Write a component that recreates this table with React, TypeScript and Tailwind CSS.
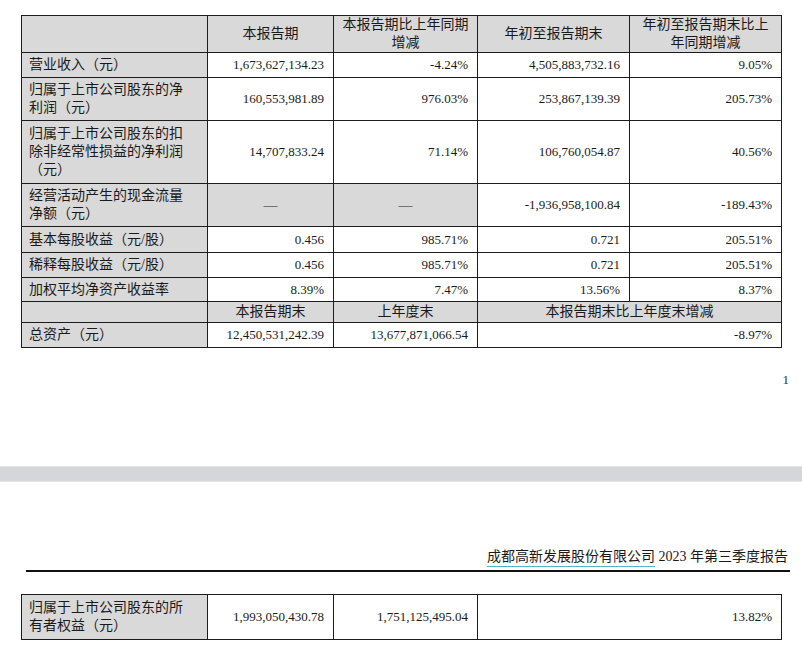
import React from 'react'

type Row = {
  label: React.ReactNode
  h: number
  cells: string[]
  dash?: boolean
}

const ROWS: Row[] = [
  { label: '营业收入（元）', h: 25, cells: ['1,673,627,134.23', '-4.24%', '4,505,883,732.16', '9.05%'] },
  { label: <>归属于上市公司股东的净<br />利润（元）</>, h: 43, cells: ['160,553,981.89', '976.03%', '253,867,139.39', '205.73%'] },
  { label: <>归属于上市公司股东的扣<br />除非经常性损益的净利润<br />（元）</>, h: 63, cells: ['14,707,833.24', '71.14%', '106,760,054.87', '40.56%'] },
  { label: <>经营活动产生的现金流量<br />净额（元）</>, h: 43, cells: ['—', '—', '-1,936,958,100.84', '-189.43%'], dash: true },
  { label: '基本每股收益（元/股）', h: 26, cells: ['0.456', '985.71%', '0.721', '205.51%'] },
  { label: '稀释每股收益（元/股）', h: 25, cells: ['0.456', '985.71%', '0.721', '205.51%'] },
  { label: '加权平均净资产收益率', h: 24, cells: ['8.39%', '7.47%', '13.56%', '8.37%'] },
]

const font = 'font-["Liberation_Serif","Noto_Sans_CJK_SC",serif]'
const cell = 'border border-[#1c1c1c] p-0 align-middle'
const labelCls = `${cell} bg-[#d9d9d9] pl-[7px] text-left text-[14px] leading-[18px]`
const numCls = `${cell} pr-[9px] text-right text-[13px] leading-[18px]`
const headCls = `${cell} bg-[#d9d9d9] text-center text-[14px] leading-[18px]`

function Cols() {
  return (
    <colgroup>
      <col className="w-[186px]" />
      <col className="w-[126px]" />
      <col className="w-[144px]" />
      <col className="w-[152px]" />
      <col className="w-[152px]" />
    </colgroup>
  )
}

export default function App() {
  return (
    <div className={`w-[802px] bg-white text-[#1a1a1a] ${font}`}>
      {/* 第一页 */}
      <div className="h-[466px] pl-[21px] pt-[15px]">
        <table className="w-[761px] table-fixed border-collapse">
          <Cols />
          <tbody>
            <tr className="h-[37px]">
              <td className={headCls}></td>
              <td className={headCls}>本报告期</td>
              <td className={headCls}>本报告期比上年同期<br />增减</td>
              <td className={headCls}>年初至报告期末</td>
              <td className={headCls}>年初至报告期末比上<br />年同期增减</td>
            </tr>
            {ROWS.map((r, i) => (
              <tr key={i} style={{ height: r.h }}>
                <td className={labelCls}>{r.label}</td>
                {r.cells.map((c, j) =>
                  r.dash && j < 2 ? (
                    <td key={j} className={`${cell} bg-[#d9d9d9] text-center text-[14px]`}>{c}</td>
                  ) : (
                    <td key={j} className={numCls}>{c}</td>
                  )
                )}
              </tr>
            ))}
            <tr className="h-[21px]">
              <td className={headCls}></td>
              <td className={headCls}>本报告期末</td>
              <td className={headCls}>上年度末</td>
              <td className={headCls} colSpan={2}>本报告期末比上年度末增减</td>
            </tr>
            <tr className="h-[25px]">
              <td className={labelCls}>总资产（元）</td>
              <td className={numCls}>12,450,531,242.39</td>
              <td className={numCls}>13,677,871,066.54</td>
              <td className={numCls} colSpan={2}>-8.97%</td>
            </tr>
          </tbody>
        </table>
        <div className="mt-[24px] pr-[13px] text-right text-[13px] leading-[16px] text-[#333]">1</div>
      </div>

      {/* 分页间隔 */}
      <div className="h-[16px] border-y border-y-[#e3e3e5] bg-[#d5d6d9]" />

      {/* 第二页 */}
      <div className="h-[168px] pt-[65px]">
        <div className="flex justify-end pr-[14px] text-[14px] leading-[20px]">
          <span className="border-b border-b-[#4fb8c4] leading-[19px]">成都高新发展股份有限公司</span>
          <span className="whitespace-pre"> 2023 年第三季度报告</span>
        </div>
        <div className="ml-[26px] mt-[3px] h-[2px] w-[764px] bg-[#111]" />
        <div className="pl-[21px] pt-[22px]">
          <table className="w-[761px] table-fixed border-collapse">
            <Cols />
            <tbody>
              <tr className="h-[45px]">
                <td className={labelCls}>归属于上市公司股东的所<br />有者权益（元）</td>
                <td className={numCls}>1,993,050,430.78</td>
                <td className={numCls}>1,751,125,495.04</td>
                <td className={numCls} colSpan={2}>13.82%</td>
              </tr>
            </tbody>
          </table>
        </div>
      </div>
    </div>
  )
}
